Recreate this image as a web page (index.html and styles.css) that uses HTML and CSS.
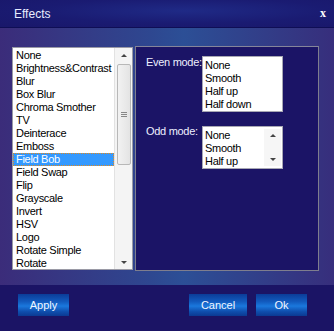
FILE: index.html
```html
<!DOCTYPE html>
<html lang="en">
<head>
    <meta charset="UTF-8">
    <title>Effects</title>
    <link rel="stylesheet" href="styles.css">
</head>
<body>
    <div class="window">
        <div class="titlebar">
            <span class="title">Effects</span>
            <span class="close">x</span>
        </div>

        <div class="content">
            <div class="listbox effects">
                <ul class="items">
                    <li>None</li>
                    <li>Brightness&amp;Contrast</li>
                    <li>Blur</li>
                    <li>Box Blur</li>
                    <li>Chroma Smother</li>
                    <li>TV</li>
                    <li>Deinterace</li>
                    <li>Emboss</li>
                    <li class="selected">Field Bob</li>
                    <li>Field Swap</li>
                    <li>Flip</li>
                    <li>Grayscale</li>
                    <li>Invert</li>
                    <li>HSV</li>
                    <li>Logo</li>
                    <li>Rotate Simple</li>
                    <li>Rotate</li>
                </ul>
                <div class="scrollbar">
                    <span class="arrow up"></span>
                    <div class="track">
                        <div class="thumb"><span class="grip"></span></div>
                    </div>
                    <span class="arrow down"></span>
                </div>
            </div>

            <div class="panel">
                <div class="row">
                    <span class="label">Even mode:</span>
                    <div class="listbox small even">
                        <ul class="items">
                            <li>None</li>
                            <li>Smooth</li>
                            <li>Half up</li>
                            <li>Half down</li>
                        </ul>
                    </div>
                </div>
                <div class="row">
                    <span class="label">Odd mode:</span>
                    <div class="listbox small odd">
                        <ul class="items">
                            <li>None</li>
                            <li>Smooth</li>
                            <li>Half up</li>
                        </ul>
                        <div class="scrollbar mini">
                            <span class="arrow up"></span>
                            <div class="track"></div>
                            <span class="arrow down"></span>
                        </div>
                    </div>
                </div>
            </div>
        </div>

        <div class="footer">
            <button class="btn">Apply</button>
            <span class="spacer"></span>
            <button class="btn wide">Cancel</button>
            <button class="btn">Ok</button>
        </div>
    </div>
</body>
</html>
```

FILE: styles.css
```css
body {
    margin: 0;
    font-family: "Liberation Sans", Arial, sans-serif;
    font-size: 11px;
    background: #1b1565;
}
.window {
    width: 334px;
    height: 331px;
    display: flex;
    flex-direction: column;
}
.titlebar {
    height: 27px;
    display: flex;
    align-items: center;
    justify-content: space-between;
    padding: 0 8px 0 14px;
    background: radial-gradient(ellipse at 55% 40%, #1f2a86 0%, #1a1b72 55%, #19176a 100%);
    border-bottom: 1px solid #0f0e55;
    color: #e8ecff;
}
.title {font-size: 12px;}
.close {
    font-family: "Liberation Serif", serif;
    font-weight: bold;
    font-size: 12px;
    color: #fff;
}
.content {
    height: 257px;
    box-sizing: border-box;
    padding: 18px 0 0 12px;
    display: flex;
    align-items: flex-start;
    background: linear-gradient(90deg, #3b2c7a 0%, #2e4790 45%, #2c4f96 55%, #372e7c 100%);
}
.listbox {
    background: #fff;
    border: 1px solid #9a9aa6;
    display: flex;
    color: #000;
    letter-spacing: -0.3px;
}
.effects {
    width: 121px;
    height: 223px;
    box-sizing: border-box;
    margin-top: 1px;
}
.items {
    list-style: none;
    margin: 0;
    padding: 1px 0 0;
    flex: 1;
}
.items li {
    height: 13px;
    line-height: 13px;
    padding-left: 3px;
    white-space: nowrap;
}
.items li.selected {
    background: #3399ff;
    color: #fff;
    outline: 1px dotted #e08a20;
    outline-offset: -1px;
}
.scrollbar {
    width: 17px;
    display: flex;
    flex-direction: column;
    align-items: center;
    background: #f4f4f4;
    border-left: 1px solid #e2e2e2;
}
.arrow {
    height: 14px;
    width: 17px;
    display: flex;
    align-items: center;
    justify-content: center;
}
.arrow::before {
    content: "";
    border-left: 3px solid transparent;
    border-right: 3px solid transparent;
}
.arrow.up::before {border-bottom: 3px solid #444;}
.arrow.down::before {border-top: 3px solid #444;}
.track {flex: 1; width: 100%; display: flex; justify-content: center;}
.thumb {
    width: 14px;
    height: 101px;
    margin-top: 2px;
    box-sizing: border-box;
    border: 1px solid #b8b8b8;
    border-radius: 2px;
    background: linear-gradient(90deg, #f2f2f2, #e4e4e4);
    display: flex;
    align-items: center;
    justify-content: center;
}
.grip {
    width: 6px;
    height: 5px;
    border-top: 1px solid #888;
    border-bottom: 1px solid #888;
    box-sizing: border-box;
    position: relative;
}
.grip::after {
    content: "";
    position: absolute;
    left: 0;
    right: 0;
    top: 1px;
    border-top: 1px solid #888;
}
.panel {
    width: 184px;
    height: 225px;
    box-sizing: border-box;
    margin-left: 2px;
    border: 1px solid #7e7e8e;
    border-top-color: #85859a;
    background: #1b1466;
    padding: 9px 0 0 10px;
    color: #eef0ff;
}
.row {
    display: flex;
    align-items: flex-start;
}
.label {
    flex: none;
    width: 56px;
    line-height: 13px;
    white-space: nowrap;
    letter-spacing: -0.3px;
}
.small {
    width: 81px;
    box-sizing: border-box;
    border-color: #a8a8b4;
}
.even {height: 56px;}
.odd {height: 43px; margin-top: 14px;}
.row:last-child .label {margin-top: 13px;}
.small .items {padding-top: 2px;}
.small .items li {padding-left: 2px;}
.mini {width: 17px; border-left: none; background: #f6f6f6; margin: 2px 1px 2px 0;}
.mini .arrow {height: 13px;}
.footer {
    flex: 1;
    display: flex;
    align-items: flex-start;
    padding: 9px 27px 0 18px;
    gap: 9px;
    background: #1b1465;
}
.spacer {flex: 1;}
.btn {
    width: 51px;
    height: 22px;
    border: none;
    padding: 0;
    font-family: "Liberation Sans", Arial, sans-serif;
    font-size: 11px;
    color: #f2f6ff;
    background: linear-gradient(180deg, #0b3c98 0%, #125bbf 35%, #1a78dd 55%, #0f4ead 80%, #0b3a92 100%);
}
.btn.wide {width: 58px;}
```
